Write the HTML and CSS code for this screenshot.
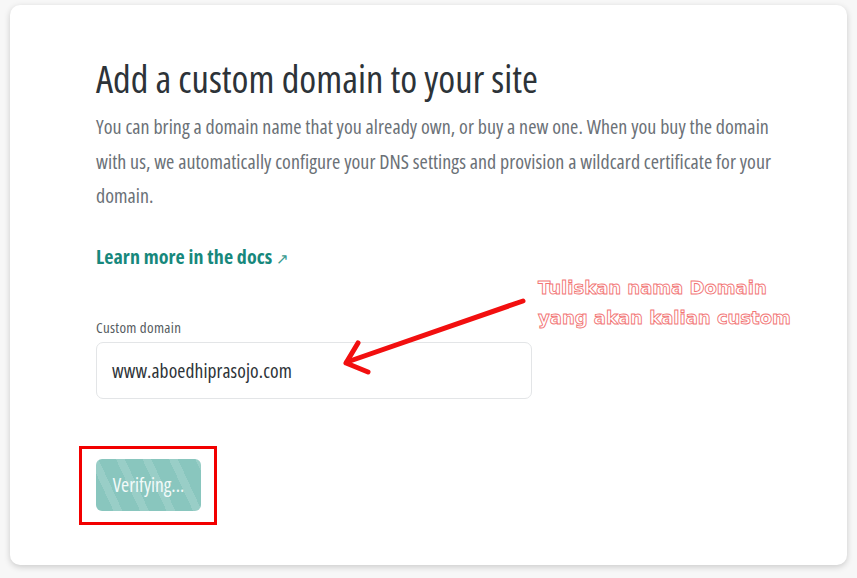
FILE: index.html
```html
<!DOCTYPE html>
<html lang="en">
<head>
<meta charset="utf-8">
<title>Add a custom domain</title>
<link rel="stylesheet" href="styles.css">
</head>
<body>
<div class="page">
  <section class="card">
    <h1 class="title">Add a custom domain to your site</h1>
    <p class="lead">You can bring a domain name that you already own, or buy a new one. When you buy the domain with us, we automatically configure your DNS settings and provision a wildcard certificate for your domain.</p>
    <a class="docs" href="#">Learn more in the docs <span class="ext">&#8599;</span></a>
    <div class="field">
      <label class="label" for="domain">Custom domain</label>
      <div class="input" id="domain">www.aboedhiprasojo.com</div>
    </div>
    <div class="actions">
      <div class="highlight">
        <button class="btn" type="button">Verifying...</button>
      </div>
    </div>
    <div class="note">Tuliskan nama Domain<br>yang akan kalian custom</div>
    <svg class="arrow" width="857" height="578" viewBox="0 0 857 578">
      <g fill="none" stroke="#f20f0f" stroke-width="5" stroke-linecap="round" stroke-linejoin="round">
        <path d="M523 301 L347 362"/>
        <path d="M358 343 L346 363 L368 372"/>
      </g>
    </svg>
  </section>
</div>
</body>
</html>
```

FILE: styles.css
```css
html, body {
  margin: 0;
  padding: 0;
  background: #f4f4f4;
}
.page {
  width: 857px;
  height: 578px;
  padding: 5px 10px 13px 10px;
  box-sizing: border-box;
  background: #f7f7f7;
}
.card {
  position: relative;
  height: 100%;
  box-sizing: border-box;
  background: #ffffff;
  border-radius: 10px;
  box-shadow: 0 2px 6px rgba(0,0,0,0.18);
  padding: 48px 40px 0 86px;
  font-family: "Open Sans", sans-serif;
  font-stretch: 75%;
}
.title {
  margin: 0;
  font-size: 38.5px;
  font-weight: 400;
  line-height: 50px;
  color: #2d3338;
}
.lead {
  margin: 7px 0 0 0;
  font-size: 20px;
  letter-spacing: 0.05px;
  line-height: 34.5px;
  color: #6b7177;
  width: 700px;
}
.docs {
  display: inline-block;
  margin-top: 29px;
  font-size: 20px;
  letter-spacing: 0.1px;
  font-weight: 700;
  color: #17887c;
  text-decoration: none;
}
.ext {
  font-weight: 400;
  font-size: 15px;
  color: #3a9b90;
}
.field {
  margin-top: 48px;
  display: flex;
  flex-direction: column;
  gap: 6px;
  width: 436px;
}
.label {
  font-size: 15px;
  letter-spacing: 0.3px;
  line-height: 18px;
  color: #565c61;
}
.input {
  height: 57px;
  box-sizing: border-box;
  border: 1px solid #e3e5e7;
  border-radius: 7px;
  padding: 0 15px;
  display: flex;
  align-items: center;
  font-size: 19.5px;
  letter-spacing: 0.1px;
  color: #2d3338;
}
.actions {
  margin-top: 47px;
  margin-left: -17px;
}
.highlight {
  display: inline-block;
  border: 3px solid #f20000;
  padding: 10px 13px 11px 14px;
}
.btn {
  display: block;
  width: 105px;
  height: 52px;
  border: none;
  border-radius: 6px;
  background: repeating-linear-gradient(65deg, #89c6be 0 16px, #99cec7 16px 24px);
  color: #f2faf9;
  font-family: "Open Sans", sans-serif;
  font-stretch: 75%;
  font-size: 19.5px;
  padding: 0;
}
.note {
  position: absolute;
  left: 528px;
  top: 268px;
  font-family: "DejaVu Sans", sans-serif;
  font-stretch: normal;
  font-weight: 700;
  font-size: 18px;
  line-height: 30px;
  color: #ffffff;
  -webkit-text-stroke: 0.9px #f27575;
}
.arrow {
  position: absolute;
  left: -10px;
  top: -5px;
  pointer-events: none;
}
```
